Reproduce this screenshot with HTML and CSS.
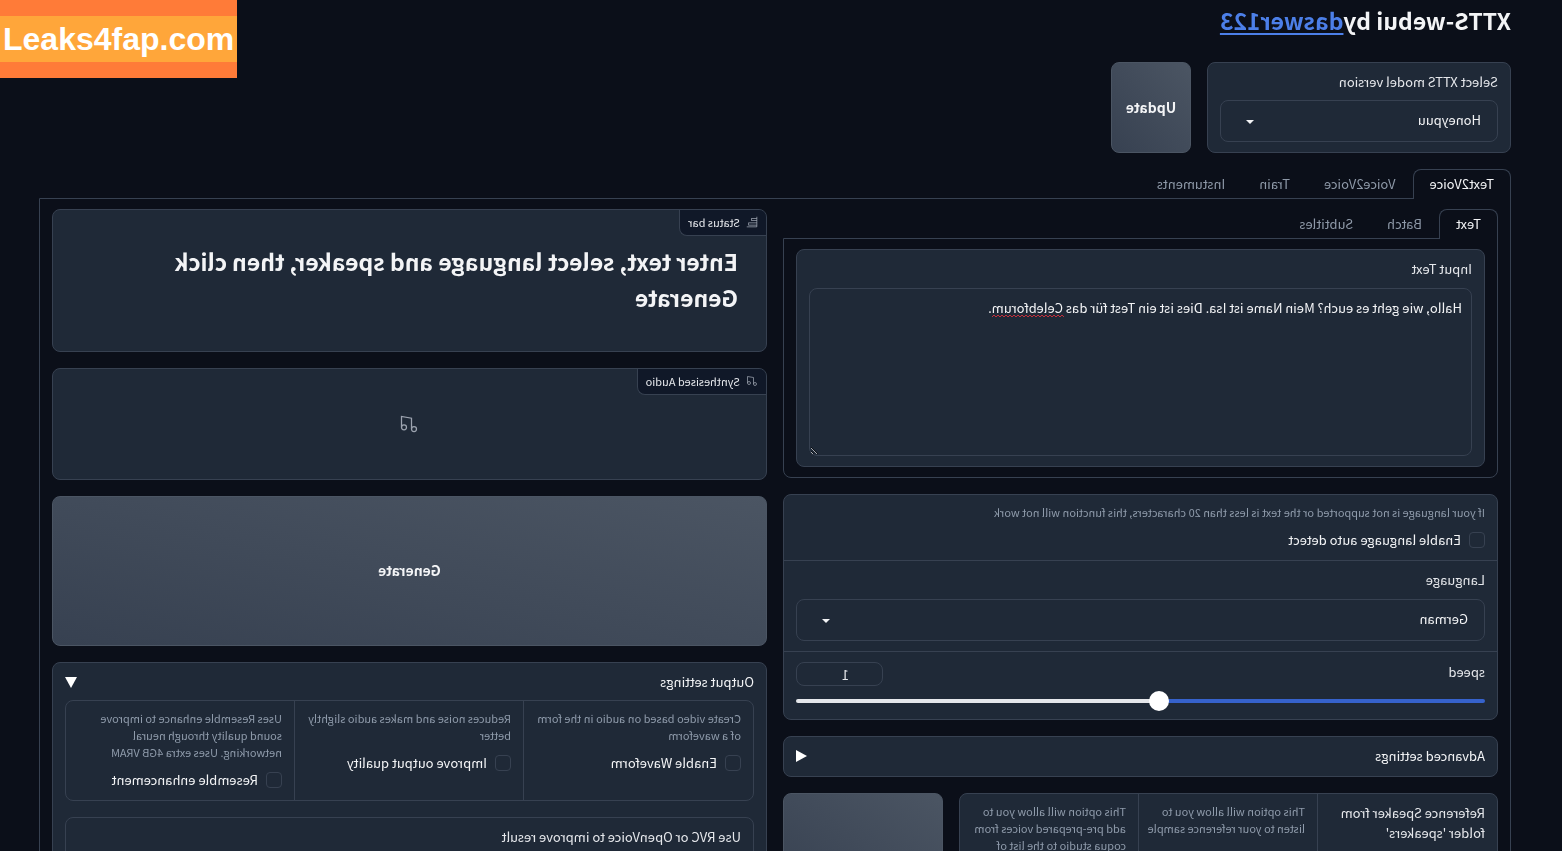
FILE: index.html
```html
<!DOCTYPE html>
<html lang="en">
<head>
<meta charset="utf-8">
<title>XTTS-webui</title>
<link rel="stylesheet" href="styles.css">
</head>
<body>
<main class="app">
  <h1 class="title">XTTS-webui by<a href="#author">daswer123</a></h1>

  <div class="model-row">
    <div class="block model-block">
      <label class="label" for="model">Select XTTS model version</label>
      <div class="select-wrap">
        <select id="model" class="select"><option>Honeypuu</option></select>
        <svg class="caret" viewBox="0 0 8 4"><path d="M0 0h8L4 4z"/></svg>
      </div>
    </div>
    <button class="button update">Update</button>
  </div>

  <nav class="tabs">
    <button class="tab active">Text2Voice</button>
    <button class="tab">Voice2Voice</button>
    <button class="tab">Train</button>
    <button class="tab">Instuments</button>
  </nav>
  <section class="panel main-panel">
    <div class="column">
      <div class="text-tabs">
        <nav class="tabs">
          <button class="tab active">Text</button>
          <button class="tab">Batch</button>
          <button class="tab">Subtitles</button>
        </nav>
        <div class="panel text-panel">
          <div class="block">
            <label class="label" for="input-text">Input Text</label>
            <div class="textarea-wrap">
              <textarea id="input-text" class="textarea" spellcheck="false">Hallo, wie geht es euch? Mein Name ist Isa. Dies ist ein Test für das Celebforum.</textarea>
              <svg class="squiggle" width="72" height="4"><defs><pattern id="wave" width="4" height="4" patternUnits="userSpaceOnUse"><path d="M0 3L2 1L4 3" fill="none" stroke="#c42f3c"/></pattern></defs><rect width="72" height="4" fill="url(#wave)"/></svg>
            </div>
          </div>
        </div>
      </div>

      <div class="form">
        <div class="cell">
          <p class="info">If your language is not supported or the text is less than 20 characters, this function will not work</p>
          <label class="check"><input type="checkbox">Enable language auto detect</label>
        </div>
        <div class="cell">
          <label class="label" for="language">Language</label>
          <div class="select-wrap">
            <select id="language" class="select"><option>German</option></select>
            <svg class="caret" viewBox="0 0 8 4"><path d="M0 0h8L4 4z"/></svg>
          </div>
        </div>
        <div class="cell speed">
          <div class="speed-head">
            <label for="speed">speed</label>
            <input class="number" type="text" inputmode="decimal" value="1" aria-label="speed value">
          </div>
          <input id="speed" class="slider" type="range" min="0" max="1000" value="472">
        </div>
      </div>

      <button class="block accordion">Advanced settings
        <svg class="mark" viewBox="0 0 12 12"><path d="M12 0v12L1 6z"/></svg>
      </button>

      <div class="speaker-row">
        <div class="form columns">
          <div class="cell"><span class="label">Reference Speaker from folder 'speakers'</span></div>
          <div class="cell">
            <p class="info">This option will allow you to listen to your reference sample</p>
            <label class="check"><input type="checkbox">Show reference sample</label>
          </div>
          <div class="cell"><p class="info">This option will allow you to add pre-prepared voices from coqua studio to the list of speakers</p></div>
        </div>
        <button class="button refresh" aria-label="Update speakers"></button>
      </div>
    </div>

    <div class="column">
      <div class="block status">
        <span class="tag"><svg viewBox="0 0 32 32"><path fill="currentColor" d="M4 2H2v26a2 2 0 0 0 2 2h26v-2H4v-3h22v-8H4v-4h14V5H4zm20 17v4H4v-4zM16 7v4H4V7z"/></svg>Status bar</span>
        <h2>Enter text, select language and speaker, then click Generate</h2>
      </div>
      <div class="block audio">
        <span class="tag"><svg viewBox="0 0 24 24" fill="none" stroke="currentColor" stroke-width="1.5"><path d="M9 18V5l12-2v13"/><circle cx="6" cy="18" r="3"/><circle cx="18" cy="16" r="3"/></svg>Synthesised Audio</span>
        <svg class="note" viewBox="0 0 24 24" fill="none" stroke="currentColor" stroke-width="1.5"><path d="M9 18V5l12-2v13"/><circle cx="6" cy="18" r="3"/><circle cx="18" cy="16" r="3"/></svg>
      </div>
      <button class="button generate">Generate</button>
      <div class="block output">
        <button class="output-head">Output settings
          <svg class="mark" viewBox="0 0 12 12"><path d="M0 1h12L6 12z"/></svg>
        </button>
        <div class="form columns">
          <div class="cell">
            <p class="info">Create video based on audio in the form of a waveform</p>
            <label class="check"><input type="checkbox">Enable Waveform</label>
          </div>
          <div class="cell">
            <p class="info">Reduces noise and makes audio slightly better</p>
            <label class="check"><input type="checkbox">Improve output quality</label>
          </div>
          <div class="cell">
            <p class="info">Uses Resemble enhance to improve sound quality through neural networking. Uses extra 4GB VRAM</p>
            <label class="check"><input type="checkbox">Resemble enhancement</label>
          </div>
        </div>
        <div class="block result"><span class="label">Use RVC or OpenVoice to improve result</span></div>
      </div>
    </div>
  </section>
</main>
<div class="watermark"><span>Leaks4fap.com</span></div>
</body>
</html>
```
FILE: styles.css
```css
:root {
  --bg: #0b0f19;
  --surface: #1f2937;
  --line: #374151;
  --text: #f3f4f6;
  --label: #e5e7eb;
  --muted: #8f9bab;
  --radius: 8px;
}

* { box-sizing: border-box; }

html { background: var(--bg); color-scheme: dark; }

body {
  margin: 0;
  height: 100vh;
  overflow: hidden;
  color: var(--text);
  font: 13px/20px "Noto Sans CJK SC", "Open Sans", sans-serif;
}

h1, h2, p { margin: 0; }

button, input, select, textarea { font: inherit; color: inherit; }

button { border: 0; padding: 0; background: none; cursor: pointer; }

/* The interface is flipped left to right. */
.app {
  padding: 2px 39px 0 51px;
  transform: scaleX(-1);
}

.title { font-size: 23px; line-height: 36px; font-weight: 700; }
.title a { color: #4c7fe8; text-underline-offset: 3px; }

.block, .form {
  background: var(--surface);
  border: 1px solid var(--line);
  border-radius: var(--radius);
}
.block { padding: 9px 12px 10px; }

.label { display: block; margin-bottom: 9px; color: var(--label); }

.model-row { display: flex; gap: 16px; margin: 24px 0 16px; }
.model-block { width: 304px; }
.model-block .label { margin-bottom: 8px; }

.button {
  padding-bottom: 2px;
  border: 1px solid #4b5563;
  border-radius: var(--radius);
  background: linear-gradient(to bottom right, #4b5563, #374151);
  font-size: 14px;
  font-weight: 700;
}
.update { width: 80px; }

.select-wrap, .textarea-wrap { position: relative; }
.select {
  display: block;
  width: 100%;
  height: 42px;
  padding: 0 16px 2px;
  appearance: none;
  background: var(--surface);
  border: 1px solid var(--line);
  border-radius: var(--radius);
}
.caret { position: absolute; right: 26px; top: 20px; width: 8px; height: 4px; fill: var(--text); }

.tabs { display: flex; height: 30px; margin-bottom: -1px; }
.tab {
  padding: 0 16px 2px;
  border: 1px solid transparent;
  border-bottom: 0;
  border-radius: var(--radius) var(--radius) 0 0;
  color: #8e99a8;
}
.tab.active {
  position: relative;
  background: var(--bg);
  border-color: var(--line);
  color: var(--text);
}

.panel { border: 1px solid var(--line); border-radius: 0 0 var(--radius) var(--radius); padding: 10px 12px; }
.main-panel { display: grid; grid-template-columns: 1fr 1fr; gap: 16px; }
.column { display: flex; flex-direction: column; gap: 16px; min-width: 0; }

.textarea {
  display: block;
  width: 100%;
  height: 168px;
  padding: 9px;
  resize: vertical;
  background: var(--surface);
  border: 1px solid var(--line);
  border-radius: var(--radius);
}
.squiggle { position: absolute; left: 408px; top: 26px; }

.cell { padding: 9px 12px 10px; }
.cell + .cell { border-top: 1px solid var(--line); }
.columns { display: grid; grid-template-columns: repeat(3, 1fr); }
.columns .cell { padding-right: 8px; }
.columns .cell + .cell { border-top: 0; border-left: 1px solid var(--line); }
.info { color: var(--muted); font-size: 11px; line-height: 17px; margin-bottom: 9px; }
.check { display: flex; align-items: center; gap: 8px; }
.check input {
  appearance: none;
  width: 16px;
  height: 16px;
  margin: 0;
  border: 1px solid var(--line);
  border-radius: 4px;
}

.speed { padding: 10px 12px 8px; }
.speed-head { display: flex; justify-content: space-between; align-items: flex-start; color: var(--label); }
.number {
  width: 87px;
  height: 24px;
  padding: 0 12px 0 0;
  text-align: center;
  background: none;
  border: 1px solid var(--line);
  border-radius: var(--radius);
}
.slider { display: block; width: 100%; height: 20px; margin: 5px 0 0; appearance: none; background: none; }
.slider::-webkit-slider-runnable-track {
  height: 4px;
  border-radius: 2px;
  background: linear-gradient(to right, #3662cc 47%, #e5e7eb 47%);
}
.slider::-webkit-slider-thumb {
  appearance: none;
  width: 20px;
  height: 20px;
  margin-top: -8px;
  border-radius: 50%;
  background: #fff;
}

.accordion, .output-head { display: flex; justify-content: space-between; align-items: center; width: 100%; }
.mark { width: 12px; height: 12px; fill: #fff; }

.speaker-row { display: flex; gap: 16px; }
.speaker-row .form { flex: 1; }
.refresh { width: 160px; }

.status, .audio { position: relative; }
.tag {
  position: absolute;
  left: 0;
  top: 0;
  display: flex;
  align-items: center;
  gap: 6px;
  height: 26px;
  padding: 0 8px 2px;
  background: #101828;
  border: solid var(--line);
  border-width: 0 1px 1px 0;
  border-radius: 7px 0 8px 0;
  color: var(--label);
  font-size: 11px;
}
.tag svg { width: 12px; height: 12px; color: #9ca3af; }
.status { height: 143px; padding: 33px 28px; }
.status h2 { font-size: 23px; line-height: 36px; font-weight: 700; }
.audio { display: flex; align-items: center; justify-content: center; height: 112px; }
.note { width: 20px; height: 20px; color: #9ca3af; }
.generate { height: 150px; }
.output-head { height: 20px; margin-bottom: 8px; }
.result { margin-top: 16px; }

.watermark {
  position: absolute;
  left: 0;
  top: 0;
  padding: 16px 0;
  background: #ff7b38;
  color: #fff;
  font: 700 32px/46px "Liberation Sans", sans-serif;
}
.watermark span { display: block; padding: 0 3px; background: #ffa63a; }
```
